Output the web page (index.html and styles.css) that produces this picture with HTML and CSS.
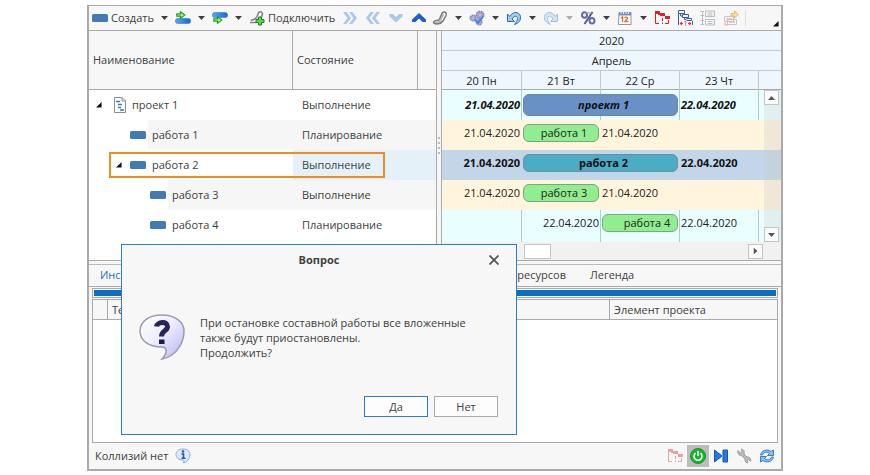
FILE: index.html
```html
<!DOCTYPE html>
<html lang="ru">
<head>
<meta charset="utf-8">
<title>Проект</title>
<link rel="stylesheet" href="styles.css">
</head>
<body>
<svg class="defs" aria-hidden="true">
  <defs>
    <linearGradient id="bubble" x1="0" y1="0" x2="1" y2="1"><stop offset="0" stop-color="#ffffff"/><stop offset=".45" stop-color="#eeeeff"/><stop offset="1" stop-color="#b4b4ee"/></linearGradient>
    <linearGradient id="blue" x1="0" y1="0" x2="1" y2="0"><stop offset="0" stop-color="#5aa4ee"/><stop offset="1" stop-color="#1668d4"/></linearGradient>
    <symbol id="task" viewBox="0 0 16 8"><rect x="0" y="0" width="16" height="8" rx="1.500" fill="#427ab5"/></symbol>
    <symbol id="caret" viewBox="0 0 7 4"><path d="M0 0H7L3.500 4Z" fill="currentColor"/></symbol>
    <symbol id="go" viewBox="0 0 10 8"><path d="M.8 2.800H4.500V.8L8.800 4 4.500 7.200V5.200H.8Z" fill="#b9f29b" stroke="#1ba51b" stroke-width="1.200"/></symbol>
    <symbol id="node" viewBox="0 0 7 7"><path d="M6.500 0V6.500H0Z" fill="#111"/></symbol>
    <symbol id="schedule" viewBox="0 0 16 16" fill="none"><path d="M1.500 2V13.500H5M4 4.500H7" stroke="currentColor"/><path d="M1 1H6V4H1ZM6 3H11V6H6ZM11 6H16V9H11Z" fill="currentColor"/><path d="M8.500 8V11M8.500 12.500V14M11 13.500H14.500V10" stroke="currentColor"/></symbol>
    <symbol id="gear" viewBox="0 0 10 10"><circle cx="5" cy="5" r="3.500" fill="#b6b8dd" stroke="#8385b8" stroke-width="2" stroke-dasharray="1.800 .6"/><circle cx="5" cy="5" r="1.300" fill="#f5f5ff" stroke="#686ba4" stroke-width=".6"/></symbol>
  </defs>
</svg>

<main class="window">
  <div class="toolbar">
    <button class="tool labelled"><svg class="i16" viewBox="0 0 16 16"><use href="#task" y="4" width="16" height="8"/></svg>Создать</button>
    <button class="drop" aria-label="Варианты создания"><svg><use href="#caret"/></svg></button>
    <button class="tool" aria-label="Добавить перед"><svg class="i16" viewBox="0 0 16 16"><rect x=".5" y="8.500" width="15" height="5" rx="2" fill="url(#blue)" stroke="#2f7cd8" stroke-width=".6"/><use href="#go" x="1" y="1" width="10" height="8"/></svg></button>
    <button class="drop" aria-label="Варианты"><svg><use href="#caret"/></svg></button>
    <button class="tool" aria-label="Добавить после"><svg class="i16" viewBox="0 0 16 16"><rect x=".5" y="2.500" width="15" height="5" rx="2" fill="url(#blue)" stroke="#2f7cd8" stroke-width=".6"/><use href="#go" x="1" y="6" width="10" height="8"/></svg></button>
    <button class="drop" aria-label="Варианты"><svg><use href="#caret"/></svg></button>
    <button class="tool labelled connect"><svg class="i16" viewBox="0 0 16 16" fill="none"><path d="M1 12.500H7M2 10.500C4 9 6 10 7.500 7.500L9 4C10-.2 14.500 2 13 5.500L11.500 9" stroke="#858585" stroke-width="1.600"/><path d="M9 5.500L7 10" stroke="#b5b5b5"/><path d="M9.500 7H12.500V9.500H15V12.500H12.500V15H9.500V12.500H7V9.500H9.500Z" fill="#58d84a" stroke="#168416"/></svg>Подключить</button>
    <div class="moves">
      <button class="tool pale" aria-label="Понизить уровень"><svg class="i16" viewBox="0 0 16 16"><path d="M1 2H4.500L9 8 4.500 14H1L5.500 8ZM7 2H10.500L15 8 10.500 14H7L11.500 8Z" fill="currentColor"/></svg></button>
      <button class="tool pale" aria-label="Повысить уровень"><svg class="i16" viewBox="0 0 16 16"><path d="M15 2H11.500L7 8 11.500 14H15L10.500 8ZM9 2H5.500L1 8 5.500 14H9L4.500 8Z" fill="currentColor"/></svg></button>
      <button class="tool pale" aria-label="Вниз"><svg class="i16" viewBox="0 0 16 16"><path d="M1.500 4H5L8 7 11 4H14.500V6.500L8 12.500 1.500 6.500Z" fill="currentColor"/></svg></button>
      <button class="tool strong" aria-label="Вверх"><svg class="i16" viewBox="0 0 16 16"><path d="M1 9.500L8 3 15 9.500V12H11.500L8 8.500 4.500 12H1Z" fill="currentColor"/></svg></button>
    </div>
    <button class="tool" aria-label="Связь"><svg class="i16" viewBox="0 0 16 16" fill="none"><path d="M1.500 12.500C3 15 9 14 11 11L14 5.500C15.500 1 10.500 1 9.500 4.500L7.500 9C6 12 2.500 9 1.500 12.500Z" stroke="#777" stroke-width="1.500"/><path d="M11.500 4L8.500 10.500C7 12.500 5 12.500 3.500 12.300" stroke="#a9a9a9" stroke-width="1.300"/></svg></button>
    <button class="drop" aria-label="Варианты связи"><svg><use href="#caret"/></svg></button>
    <button class="tool" aria-label="Операции"><svg class="i16" viewBox="0 0 16 16"><use href="#gear" x="6" y="0" width="10" height="10"/><use href="#gear" x="0" y="4" width="8" height="8"/><use href="#gear" x="6" y="8" width="8" height="8"/><path d="M6 9.500L9 13 14 6.500" fill="none" stroke="#3c7de0" stroke-width="1.500"/></svg></button>
    <button class="drop" aria-label="Варианты операций"><svg><use href="#caret"/></svg></button>
    <button class="tool undo" aria-label="Отменить"><svg class="i16" viewBox="0 0 16 16"><path d="M1.500 4V11.500H8.500L6 9C8 5.500 11.500 5.500 11.500 8.500 11.500 11 10 12.500 8.500 14.500 13 13 15 10 14.500 6.500 13.500 1.500 7 .8 3.800 6.500Z" fill="#9dcbf3" stroke="#236ec1"/></svg></button>
    <button class="drop" aria-label="История отмен"><svg><use href="#caret"/></svg></button>
    <button class="tool faded" aria-label="Повторить"><svg class="i16 flip" viewBox="0 0 16 16"><path d="M1.500 4V11.500H8.500L6 9C8 5.500 11.500 5.500 11.500 8.500 11.500 11 10 12.500 8.500 14.500 13 13 15 10 14.500 6.500 13.500 1.500 7 .8 3.800 6.500Z" fill="#9dcbf3" stroke="#236ec1"/></svg></button>
    <button class="drop faded" aria-label="История повторов"><svg><use href="#caret"/></svg></button>
    <button class="tool" aria-label="Процент выполнения"><svg class="i16" viewBox="0 0 16 16" fill="none"><path d="M12.500 2L4.500 14" stroke="#555a92" stroke-width="2"/><ellipse cx="4.500" cy="5" rx="2.500" ry="2.800" stroke="#666ba5" stroke-width="2"/><ellipse cx="12" cy="10.800" rx="2.500" ry="2.800" stroke="#666ba5" stroke-width="2"/><path d="M5 3H12" stroke="#9a9dca"/></svg></button>
    <button class="drop" aria-label="Варианты процента"><svg><use href="#caret"/></svg></button>
    <button class="tool" aria-label="Календарь"><svg class="i16" viewBox="0 0 16 16"><path d="M2 2.500H14V14.500H1.500Z" fill="#fff" stroke="#8a91b5"/><path d="M2 2.500H14V5.500H2Z" fill="#7f89bf"/><path d="M4 1V4M6.500 1V4M9 1V4M11.500 1V4" stroke="#e9ecff"/><path d="M4 8L5.500 7V12M8 8C8 6.500 11 6.800 10.500 8.500L8 11.500H11.500" fill="none" stroke="#e46a24" stroke-width="1.300"/></svg></button>
    <button class="drop" aria-label="Варианты календаря"><svg><use href="#caret"/></svg></button>
    <div class="views">
      <button class="tool red" aria-label="Критический путь"><svg class="i16"><use href="#schedule"/></svg></button>
      <button class="tool" aria-label="Сроки"><svg class="i16" viewBox="0 0 16 16" fill="none"><path d="M1.500 .5H7.500V3.500H1.500ZM5.500 4.500H11.500V7.500H5.500ZM9.500 8.500H14.500V10.500H9.500M1.500 3.500V15M3.500 3.500V6H5.500M7.500 7.500V9.500H9.500M15.500 11V15" stroke="#315f9f"/><path d="M3 13.500H6M11 13.500H14" stroke="#ed2836"/><path d="M5 11.500L2.500 13.500 5 15.500ZM12 11.500L14.500 13.500 12 15.500Z" fill="#ed2836"/><path d="M7.500 12C8 11 9.500 11.500 9 12.500L8.500 13.500M8.500 14.500V15.500" stroke="#ed2836"/></svg></button>
      <button class="tool" aria-label="Структура"><svg class="i16" viewBox="0 0 16 16" fill="none" stroke="#b9bcc2"><path d="M.5 1.500H4M.5 5.500H4M.5 10.500H4M.5 14.500H4M2.500 1.500V14.500M5.500 1H14.500V6.500H5.500ZM5.500 9.500H14.500V15H5.500ZM7.500 3H12.500M7.500 5H12.500M7.500 11.500H12.500M7.500 13.500H12.500"/></svg></button>
      <button class="tool" aria-label="Перенос"><svg class="i16" viewBox="0 0 16 16" fill="none"><path d="M1.500 6.500H10.500V11.500H1.500ZM4.500 9.500H13.500V14.500H4.500Z" stroke="#c3c4c7"/><path d="M2 12.500V15H5M3 9H9M6 12H12" stroke="#e9a3a3"/><path d="M8 3.500H11.500V1L15.500 4.500 11.500 8V6H8Z" fill="#fae29b" stroke="#e7bd62"/></svg></button>
    </div>
    <svg class="corner"><use href="#node"/></svg>
  </div>

  <section class="planner">
    <div class="tree">
      <table>
        <colgroup><col class="c-name"><col class="c-state"><col class="c-rest"></colgroup>
        <thead><tr><th>Наименование</th><th>Состояние</th><th></th></tr></thead>
        <tbody>
          <tr><td><div class="cell l0"><svg class="node"><use href="#node"/></svg><svg class="doc" viewBox="0 0 14 16" fill="none"><path d="M1.500 .5H9L12.500 4V15.500H1.500Z" fill="#fff" stroke="#858d96"/><path d="M9 .5V4H12.500" stroke="#858d96"/><path d="M3 4.500H7M5 7.500H9M5 10.500H8M7 13H11" stroke="#347ab8" stroke-width="1.600"/></svg><span>проект 1</span></div></td><td colspan="2">Выполнение</td></tr>
          <tr class="alt"><td><div class="cell l1"><i class="node"></i><svg class="task"><use href="#task"/></svg><span>работа 1</span></div></td><td colspan="2">Планирование</td></tr>
          <tr class="current"><td><div class="cell l1"><svg class="node"><use href="#node"/></svg><svg class="task"><use href="#task"/></svg><span>работа 2</span></div></td><td colspan="2">Выполнение</td></tr>
          <tr class="alt"><td><div class="cell l2"><i class="node"></i><svg class="task"><use href="#task"/></svg><span>работа 3</span></div></td><td colspan="2">Выполнение</td></tr>
          <tr><td><div class="cell l2"><i class="node"></i><svg class="task"><use href="#task"/></svg><span>работа 4</span></div></td><td colspan="2">Планирование</td></tr>
        </tbody>
      </table>
    </div>
    <div class="splitter"><i></i><i></i><i></i><i></i></div>
    <div class="gantt">
      <div class="scale"><div class="wide">2020</div></div>
      <div class="scale"><div class="wide">Апрель</div></div>
      <div class="scale days"><div>20 Пн</div><div>21 Вт</div><div>22 Ср</div><div>23 Чт</div><div></div></div>
      <div class="chart">
        <div class="line project"><span class="from">21.04.2020</span><div class="bar two">проект 1</div><span>22.04.2020</span></div>
        <div class="line sand"><span class="from">21.04.2020</span><div class="bar">работа 1</div><span>21.04.2020</span></div>
        <div class="line summary"><span class="from">21.04.2020</span><div class="bar two">работа 2</div><span>22.04.2020</span></div>
        <div class="line sand"><span class="from">21.04.2020</span><div class="bar">работа 3</div><span>21.04.2020</span></div>
        <div class="line"><span class="from second">22.04.2020</span><div class="bar late">работа 4</div><span>22.04.2020</span></div>
        <div class="days grid"><div></div><div></div><div></div><div></div><div></div></div>
        <div class="vscroll"><button class="up" aria-label="Вверх"><svg><use href="#caret"/></svg></button><button aria-label="Вниз"><svg><use href="#caret"/></svg></button></div>
      </div>
      <div class="hscroll"><div class="thumb"></div><button aria-label="Вправо"><svg><use href="#caret"/></svg></button></div>
    </div>
  </section>

  <section class="details">
    <nav class="tabs"><a href="#" class="active">Инспектор</a><a href="#" class="resources">Загрузка ресурсов</a><a href="#">Легенда</a></nav>
    <div class="panel">
      <div class="strip"></div>
      <div class="list">
        <table>
          <colgroup><col class="c-mark"><col><col class="c-element"></colgroup>
          <thead><tr><th></th><th>Текст</th><th>Элемент проекта</th></tr></thead>
        </table>
      </div>
    </div>
  </section>

  <footer class="status">
    <span>Коллизий нет</span>
    <svg class="i16" viewBox="0 0 16 16"><path d="M8 1C3.500 1 1 3.500 1 6.500S3.500 12 8 12C9 12 9.500 13.500 8.500 15 12 14 15 10.500 15 6.500 15 3 12 1 8 1Z" fill="#dfeaff" stroke="#8ba8d8"/><circle cx="8" cy="3.500" r="1.300" fill="#1757c0"/><path d="M6.500 6H8.500V10M6.500 10.300H10.500" fill="none" stroke="#1757c0" stroke-width="1.600"/></svg>
    <div class="actions">
      <button class="red faded" aria-label="Критический путь"><svg class="i16"><use href="#schedule"/></svg></button>
      <button class="pressed" aria-label="Включено"><svg class="i16" viewBox="0 0 16 16" fill="none"><circle cx="8" cy="8" r="7.500" fill="#16b52c" stroke="#149626"/><path d="M5.500 5.200A4 4 0 1 0 10.500 5.200M8 3V8" stroke="#fff" stroke-width="1.600"/></svg></button>
      <button aria-label="Далее"><svg class="i16" viewBox="0 0 16 16"><path d="M1.500 2L9 8 1.500 14ZM10 2H14.500V14H10Z" fill="#247bd8" stroke="#1458b0"/></svg></button>
      <button aria-label="Настройка"><svg class="i16" viewBox="0 0 16 16"><path d="M2 2.500L4.500 5 6 4 5.500 1C8.500 2 8.500 4 8 6L11 9C13.500 8.500 15.500 11 14.500 13.500L12.500 11.500 11 12.500 12 15C9.500 14.500 8.500 13 9 11L5.500 7.500C3 8 1 5 2 2.500Z" fill="#bbb" stroke="#8e8e8e" stroke-width=".8"/></svg></button>
      <button aria-label="Обновить"><svg class="i16" viewBox="0 0 16 16"><path d="M1.500 7C2.500 2.500 8 .5 12 3.500L14.500 2V7.500H8.500L10.500 5.500C8 3.500 4.500 4 3.500 7Z" fill="#8bc0f2" stroke="#286fc4" stroke-width=".9"/><path d="M14.500 9C13.500 13.500 8 15.500 4 12.500L1.500 14V8.500H7.500L5.500 10.500C8 12.500 11.500 12 12.500 9Z" fill="#8bc0f2" stroke="#286fc4" stroke-width=".9"/></svg></button>
    </div>
  </footer>

  <div class="dialog" role="dialog" aria-labelledby="dialog-title">
    <header><h1 id="dialog-title">Вопрос</h1><button class="close" aria-label="Закрыть"><svg viewBox="0 0 10 10"><path d="M.5 .5L9.500 9.500M9.500 .5L.5 9.500" stroke="#555" stroke-width="1.800"/></svg></button></header>
    <div class="message">
      <svg class="question" viewBox="0 0 46 46"><path d="M23 1C9 1 1 8 1 17S9 33 23 33C28 33 29 39 23 45 36 43 45 30 45 17 45 8 36 1 23 1Z" fill="url(#bubble)" stroke="#9b9bad" stroke-width="1.500"/><path d="M17.500 12.500C18 8 28.500 6.500 28.500 12.500 28.500 17.500 22.500 16 22.500 22.500" fill="none" stroke="#25235c" stroke-width="5"/><path d="M20 25.500H25.500V30H20Z" fill="#1c1a48"/></svg>
      <p>При остановке составной работы все вложенные<br>также будут приостановлены.<br>Продолжить?</p>
    </div>
    <div class="answers"><button class="default">Да</button><button>Нет</button></div>
  </div>
</main>
</body>
</html>
```

FILE: styles.css
```css
* { box-sizing: border-box; }
body {
  margin: 0;
  background: #fff;
  color: #404040;
  font: 11px/16px "Open Sans", "Noto Sans", sans-serif;
}
svg { display: block; flex: none; }
.defs { position: absolute; width: 0; height: 0; }
button { border: 0; padding: 0; background: none; color: inherit; font: inherit; }
table { width: 100%; border-collapse: separate; border-spacing: 0; table-layout: fixed; }
th { font-weight: 400; text-align: left; }
th, td { padding: 0; }
.i16 { width: 16px; height: 16px; }

.window {
  position: relative;
  display: flex;
  flex-direction: column;
  margin: 5px 87px 0;
  border: 2px solid #aaa;
  border-top-width: 1px;
  background: #f7f7f7;
}

/* Toolbar */
.toolbar { display: flex; align-items: center; height: 25px; padding: 0 2px 0 3px; border-bottom: 1px solid #aaa; }
.tool { display: flex; align-items: center; gap: 3px; }
.drop { display: flex; justify-content: center; width: 21px; color: #404040; }
.drop svg { width: 7px; height: 4px; }
.moves, .views { display: flex; gap: 7px; }
.moves { margin: 0 5px 0 7px; }
.views { padding-right: 6px; border-right: 1px solid #ddd; }
.pale { color: #a9c8ea; }
.strong { color: #1c62c4; }
.red { color: #d9202c; }
.faded { opacity: .4; }
.flip { transform: scaleX(-1); }
.corner { width: 6px; height: 6px; margin: 11px 0 0 auto; }

/* Tree and chart */
.planner { display: flex; border-bottom: 1px solid #aaa; }
.tree { flex: none; width: 348px; border-right: 1px solid #aaa; background: #fff; }
.c-name { width: 204px; }
.c-state { width: 125px; }
.c-rest { width: 18px; }
.tree th { height: 59px; padding-left: 4px; border-right: 1px solid #aaa; border-bottom: 1px solid #aaa; background: #f7f7f7; }
.tree th:last-child { border-right: 0; }
.tree td { height: 30px; }
.tree td + td { padding-left: 9px; }
.alt td + td, .alt span { background: #f6f6f6; }
.cell { display: flex; align-items: center; height: 30px; }
.cell span { flex: 1; padding-left: 4px; line-height: 30px; }
.l0 { padding-left: 7px; }
.l1 { padding-left: 27px; }
.l2 { padding-left: 47px; }
.node { flex: none; width: 6px; height: 6px; margin-right: 8px; }
.task { width: 16px; height: 8px; margin-right: 2px; }
.doc { width: 14px; height: 16px; margin: 0 1px 0 3px; }
.current { position: relative; }
.current td + td { background: #e4f1f9; }
.current::after { content: ""; position: absolute; inset: 2px 51px 2px 20px; border: 2px solid #ed8e1c; }
.splitter { display: flex; flex-direction: column; justify-content: center; align-items: center; gap: 3px; width: 4px; }
.splitter i { width: 2px; height: 2px; background: #bbb; }

.gantt { flex: 1; border-left: 1px solid #aaa; color: #222; }
.scale { height: 20px; border-bottom: 1px solid #c4c9ce; background: #eef6fe; line-height: 19px; text-align: center; }
.days, .line { display: grid; grid-template-columns: 80px 79px 79px 79px 1fr; }
.days div { border-right: 1px solid #c4c9ce; }
.days div:last-child { border-right: 0; }
.scale.days { height: 19px; border-color: #aaa; }
.chart { position: relative; height: 152px; background: #e9ffff; line-height: 24px; }
.line { position: relative; z-index: 1; height: 30px; padding-top: 1px; white-space: nowrap; }
.line > span { padding-left: 1px; }
.line > .from { padding: 0 2px 0 0; text-align: right; }
.line > .second { grid-column: 2; }
.sand { background: #fff5dc; }
.bar { height: 18px; margin: 3px 2px 0 1px; border: 1px solid #7da584; border-radius: 6px; background: #90ee90; line-height: 16px; text-align: center; padding-left: 6px; }
.two { grid-column: span 2; }
.late { padding-left: 14px; }
.project, .summary { color: #111; font-weight: 700; }
.project { font-style: italic; line-height: 28px; }
.project .bar { height: 22px; border-color: #7084a4; background: #6991c8; line-height: 20px; }
.summary { background: #c3d5e8; }
.summary .bar { border-color: #6a8fa0; background: #4bacc6; }
.grid { position: absolute; inset: 0; }
.grid div { border-color: #b5cccc; }
.vscroll { position: absolute; z-index: 2; inset: 0 0 0 auto; display: flex; flex-direction: column; justify-content: space-between; width: 17px; background: #c8c8c844; }
.vscroll button, .hscroll button { display: flex; align-items: center; justify-content: center; width: 15px; height: 15px; border: 1px solid #c4c4c4; background: #fafafa; color: #555; }
.vscroll svg, .hscroll svg { width: 7px; height: 4px; }
.up svg { transform: rotate(180deg); }
.hscroll { display: flex; align-items: center; height: 18px; padding: 0 18px 0 82px; background: #f1f1f1; }
.hscroll svg { transform: rotate(-90deg); }
.thumb { width: 27px; height: 15px; margin-right: auto; border: 1px solid #c4c4c4; background: #fff; }

/* Lower panel */
.details { margin-top: 3px; border-top: 1px solid #bbb; }
.tabs { display: flex; gap: 24px; height: 21px; padding-left: 11px; line-height: 20px; }
.tabs a { color: inherit; text-decoration: none; }
.tabs .active { flex: none; width: 62px; color: #1b75bc; }
.tabs .resources { flex: none; width: 380px; text-align: right; }
.panel { padding: 1px 3px 0; border-top: 1px solid #aaa; }
.strip { height: 10px; margin-bottom: 1px; border: 1px solid #aaa; background: #0a6fc2; outline: 1px solid #fff; outline-offset: -2px; }
.list { height: 144px; border: 1px solid #aaa; background: #fff; }
.c-mark { width: 15px; }
.c-element { width: 167px; }
.list th { height: 20px; padding-left: 4px; border-right: 1px solid #aaa; border-bottom: 1px solid #aaa; background: #f7f7f7; }
.list th:last-child { border-right: 0; }
.status { display: flex; align-items: center; gap: 7px; height: 26px; padding: 0 3px 0 6px; }
.actions { display: flex; gap: 1px; margin-left: auto; }
.actions button { display: flex; align-items: center; justify-content: center; width: 22px; height: 22px; }
.actions .pressed { background: #bdbdbd; }

/* Question dialog */
.dialog { position: absolute; top: 238px; left: 32px; width: 396px; border: 1px solid #2d7dbf; background: #f7f7f7; }
.dialog header { display: flex; align-items: center; height: 30px; padding: 0 17px 0 27px; }
.dialog h1 { flex: 1; margin: 0; font-size: 11px; text-align: center; }
.close svg { width: 10px; height: 10px; }
.message { display: flex; gap: 15px; padding: 39px 17px 0; }
.message p { margin: 1px 0 0; line-height: 15px; white-space: nowrap; }
.question { width: 46px; height: 46px; }
.answers { display: flex; justify-content: flex-end; gap: 6px; padding: 36px 18px 17px; }
.answers button { width: 64px; height: 21px; border: 1px solid #aaa; background: #fdfdfd; }
.answers .default { border-color: #2d7dbf; }
```
